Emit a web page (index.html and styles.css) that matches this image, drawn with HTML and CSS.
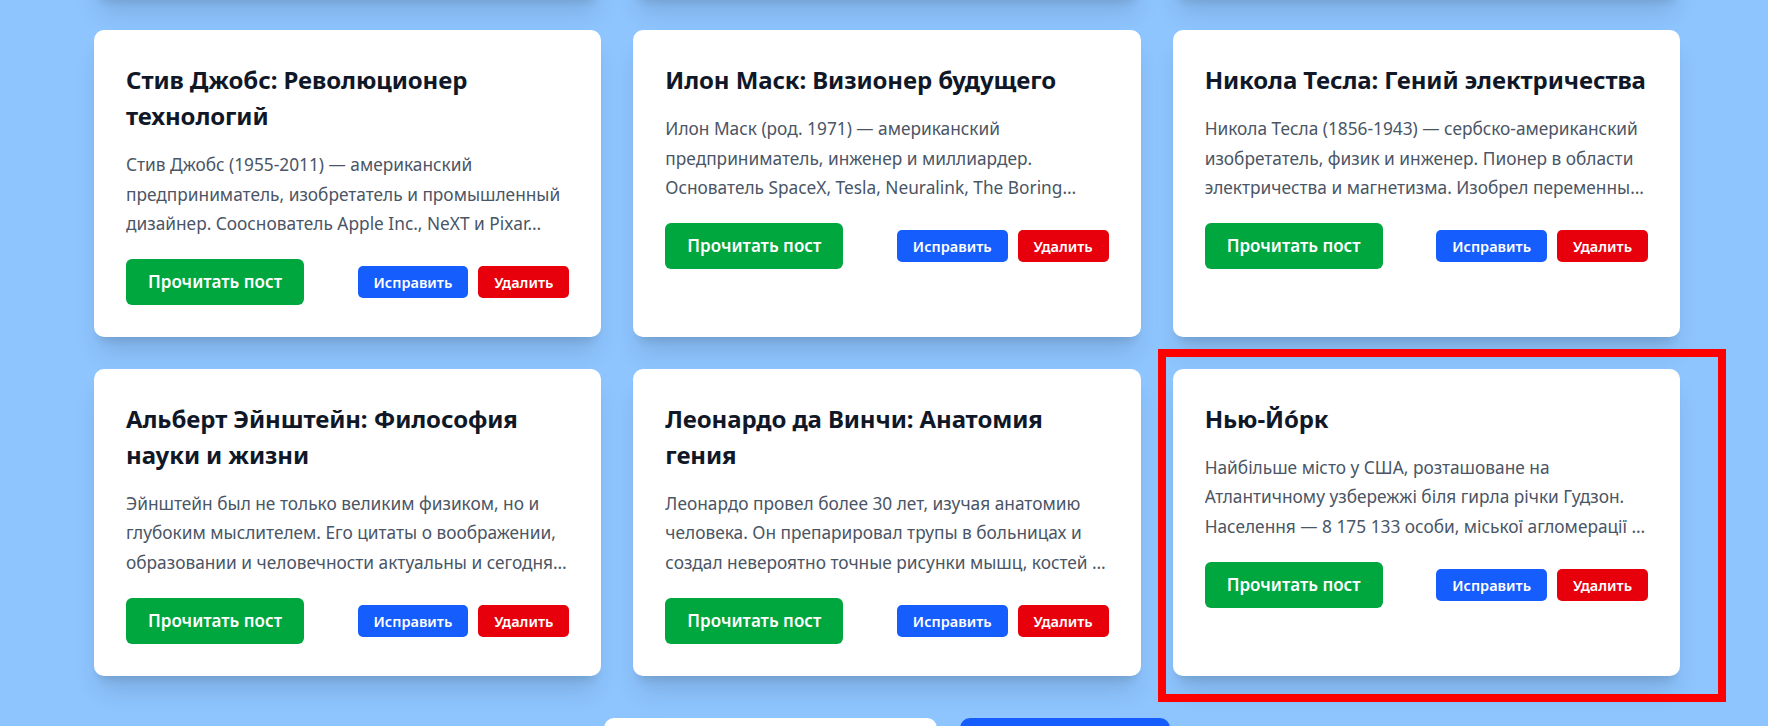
FILE: index.html
```html
<!DOCTYPE html>
<html lang="ru">
<head>
<meta charset="utf-8">
<title>Посты</title>
<link rel="stylesheet" href="styles.css">
</head>
<body>
<main class="page">
  <section class="grid">
    <div class="card card--ghost" aria-hidden="true"></div>
    <div class="card card--ghost" aria-hidden="true"></div>
    <div class="card card--ghost" aria-hidden="true"></div>

    <article class="card">
      <h2 class="card__title">Стив Джобс: Революционер технологий</h2>
      <p class="card__text">Стив Джобс (1955-2011) — американский предприниматель, изобретатель и промышленный дизайнер. Сооснователь Apple Inc., NeXT и Pixar…</p>
      <div class="card__actions">
        <a class="btn btn--read" href="#">Прочитать пост</a>
        <div class="card__tools">
          <a class="btn btn--small btn--edit" href="#">Исправить</a>
          <a class="btn btn--small btn--delete" href="#">Удалить</a>
        </div>
      </div>
    </article>

    <article class="card">
      <h2 class="card__title">Илон Маск: Визионер будущего</h2>
      <p class="card__text">Илон Маск (род. 1971) — американский предприниматель, инженер и миллиардер. Основатель SpaceX, Tesla, Neuralink, The Boring…</p>
      <div class="card__actions">
        <a class="btn btn--read" href="#">Прочитать пост</a>
        <div class="card__tools">
          <a class="btn btn--small btn--edit" href="#">Исправить</a>
          <a class="btn btn--small btn--delete" href="#">Удалить</a>
        </div>
      </div>
    </article>

    <article class="card">
      <h2 class="card__title">Никола Тесла: Гений электричества</h2>
      <p class="card__text">Никола Тесла (1856-1943) — сербско-американский изобретатель, физик и инженер. Пионер в области электричества и магнетизма. Изобрел переменны…</p>
      <div class="card__actions">
        <a class="btn btn--read" href="#">Прочитать пост</a>
        <div class="card__tools">
          <a class="btn btn--small btn--edit" href="#">Исправить</a>
          <a class="btn btn--small btn--delete" href="#">Удалить</a>
        </div>
      </div>
    </article>

    <article class="card">
      <h2 class="card__title">Альберт Эйнштейн: Философия науки и жизни</h2>
      <p class="card__text">Эйнштейн был не только великим физиком, но и глубоким мыслителем. Его цитаты о воображении, образовании и человечности актуальны и сегодня…</p>
      <div class="card__actions">
        <a class="btn btn--read" href="#">Прочитать пост</a>
        <div class="card__tools">
          <a class="btn btn--small btn--edit" href="#">Исправить</a>
          <a class="btn btn--small btn--delete" href="#">Удалить</a>
        </div>
      </div>
    </article>

    <article class="card">
      <h2 class="card__title">Леонардо да Винчи: Анатомия гения</h2>
      <p class="card__text">Леонардо провел более 30 лет, изучая анатомию человека. Он препарировал трупы в больницах и создал невероятно точные рисунки мышц, костей …</p>
      <div class="card__actions">
        <a class="btn btn--read" href="#">Прочитать пост</a>
        <div class="card__tools">
          <a class="btn btn--small btn--edit" href="#">Исправить</a>
          <a class="btn btn--small btn--delete" href="#">Удалить</a>
        </div>
      </div>
    </article>

    <article class="card">
      <h2 class="card__title">Нью-Йо́рк</h2>
      <p class="card__text">Найбільше місто у США, розташоване на Атлантичному узбережжі біля гирла річки Гудзон. Населення — 8 175 133 особи, міської агломерації …</p>
      <div class="card__actions">
        <a class="btn btn--read" href="#">Прочитать пост</a>
        <div class="card__tools">
          <a class="btn btn--small btn--edit" href="#">Исправить</a>
          <a class="btn btn--small btn--delete" href="#">Удалить</a>
        </div>
      </div>
      <div class="card__highlight" aria-hidden="true"></div>
    </article>
  </section>

  <nav class="pager">
    <a class="pager__btn pager__btn--light" href="#">Предыдущая страница</a>
    <a class="pager__btn pager__btn--primary" href="#">Следующая</a>
  </nav>
</main>
</body>
</html>
```
FILE: styles.css
```css
* { box-sizing: border-box; }

html, body {
  margin: 0;
  background: #8ec5ff;
  font-family: "Noto Sans", "Open Sans", sans-serif;
}

.page {
  padding: 0 88px 80px 94px;
}

.grid {
  display: grid;
  grid-template-columns: repeat(3, 1fr);
  gap: 32px;
  margin-top: -309px;
}

.card {
  position: relative;
  background: #ffffff;
  border-radius: 10px;
  padding: 32px;
  box-shadow: 0 20px 25px -5px rgba(0, 0, 0, 0.12), 0 8px 10px -6px rgba(0, 0, 0, 0.12);
}

.card--ghost {
  height: 307px;
}

.card__title {
  margin: 0 0 16px;
  font-size: 24px;
  line-height: 36px;
  font-weight: 700;
  letter-spacing: -0.1px;
  color: #101828;
}

.card__text {
  margin: 0 0 20px;
  font-size: 17.3px;
  line-height: 29.6px;
  color: #4a5565;
  display: -webkit-box;
  -webkit-line-clamp: 3;
  -webkit-box-orient: vertical;
  overflow: hidden;
}

.card__actions {
  display: flex;
  justify-content: space-between;
  align-items: center;
}

.card__tools {
  display: flex;
  gap: 10px;
}

.btn {
  display: inline-block;
  color: #ffffff;
  text-decoration: none;
  font-weight: 600;
  white-space: nowrap;
}

.btn--read {
  background: #00a63e;
  font-size: 17px;
  line-height: 26px;
  padding: 10px 22px;
  border-radius: 6px;
}

.btn--small {
  font-size: 14.5px;
  line-height: 24px;
  padding: 4px 16px;
  border-radius: 5px;
}

.btn--edit { background: #155dfc; }
.btn--delete { background: #e7000b; }

.card__highlight {
  position: absolute;
  left: -15px;
  top: -20px;
  width: 568px;
  height: 353px;
  border: 8px solid #ff0000;
  pointer-events: none;
}

.pager {
  display: flex;
  justify-content: center;
  gap: 23px;
  margin-top: 42px;
}

.pager__btn {
  display: inline-block;
  padding: 14px 24px;
  border-radius: 10px;
  font-size: 17px;
  line-height: 26px;
  font-weight: 600;
  text-align: center;
  text-decoration: none;
  box-shadow: 0 10px 15px -3px rgba(0, 0, 0, 0.1);
}

.pager__btn--light {
  width: 333px;
  background: #ffffff;
  color: #101828;
}

.pager__btn--primary {
  width: 210px;
  background: #155dfc;
  color: #ffffff;
}
```
